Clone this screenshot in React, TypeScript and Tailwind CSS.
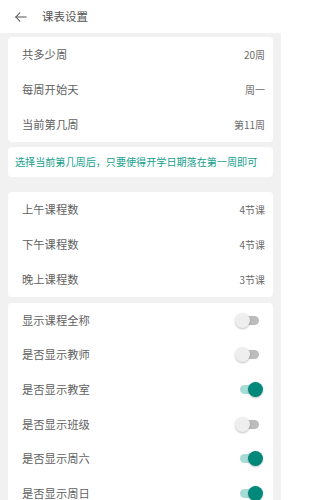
import React from 'react';

const font = { fontFamily: '"Noto Sans CJK SC", "Noto Sans", sans-serif' };

const Toggle = ({ on }: { on: boolean }) => (
  <div className="relative w-[28px] h-[16px] flex items-center">
    <div className={`ml-[5px] w-[19px] h-[9px] rounded-full ${on ? 'bg-[#a7dbd5]' : 'bg-[#bcbcbc]'}`} />
    <div
      className={`absolute top-[0.5px] w-[15px] h-[15px] rounded-full shadow-[0_1px_2px_rgba(0,0,0,0.25)] ${
        on ? 'left-[13px] bg-[#00897b]' : 'left-0 bg-[#eeeeee]'
      }`}
    />
  </div>
);

const Row = ({ label, children }: { label: string; children: React.ReactNode }) => (
  <div className="h-[35px] flex items-center justify-between pl-[14px] pr-[8px]">
    <span className="text-[11.3px] text-[#5f5f5f]">{label}</span>
    {children}
  </div>
);

const Value = ({ v }: { v: string }) => <span className="text-[10px] text-[#6a6a6a]">{v}</span>;

export default function App() {
  const toggles: [string, boolean][] = [
    ['显示课程全称', false],
    ['是否显示教师', false],
    ['是否显示教室', true],
    ['是否显示班级', false],
    ['是否显示周六', true],
    ['是否显示周日', true],
  ];
  return (
    <div className="w-[281px] h-[500px] overflow-hidden bg-[#f1f1f1]" style={font}>
      <div className="h-[33px] bg-white flex items-center">
        <svg className="ml-[14px]" width="14" height="14" viewBox="0 0 24 24" fill="none" stroke="#555" strokeWidth="1.8" strokeLinecap="round" strokeLinejoin="round">
          <path d="M21 12H3" />
          <path d="M10 5l-7 7 7 7" />
        </svg>
        <span className="ml-[14px] text-[11.5px] text-[#555]">课表设置</span>
      </div>

      <div className="mx-[8px] mt-[4px] bg-white rounded-[4px]">
        <Row label="共多少周"><Value v="20周" /></Row>
        <Row label="每周开始天"><Value v="周一" /></Row>
        <Row label="当前第几周"><Value v="第11周" /></Row>
      </div>

      <div className="mx-[8px] mt-[5px] h-[30px] bg-white rounded-[4px] flex items-center pl-[7px]">
        <span className="text-[10.1px] text-[#16a08e] whitespace-nowrap">选择当前第几周后，只要使得开学日期落在第一周即可</span>
      </div>

      <div className="mx-[8px] mt-[15px] bg-white rounded-[4px]">
        <Row label="上午课程数"><Value v="4节课" /></Row>
        <Row label="下午课程数"><Value v="4节课" /></Row>
        <Row label="晚上课程数"><Value v="3节课" /></Row>
      </div>

      <div className="mx-[8px] mt-[6px] bg-white rounded-[4px]">
        {toggles.map(([label, on]) => (
          <div key={label} className="h-[34.6px] flex items-center justify-between pl-[14px] pr-[10px]">
            <span className="text-[11.3px] text-[#5f5f5f]">{label}</span>
            <Toggle on={on} />
          </div>
        ))}
      </div>
    </div>
  );
}
